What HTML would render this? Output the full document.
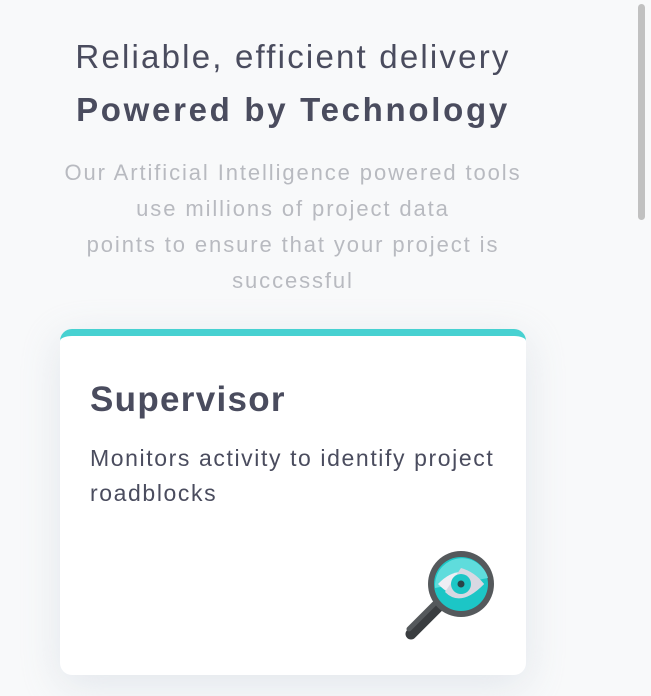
<!DOCTYPE html>
<html><head><style>
html,body{margin:0;padding:0;}
body{width:651px;height:696px;background:#f8f9fa;font-family:"Liberation Sans",sans-serif;position:relative;overflow:hidden;}
.h1{position:absolute;left:0;width:586px;text-align:center;color:#4a4c5e;white-space:nowrap;}
.l1{top:38px;font-size:33px;font-weight:300;letter-spacing:2.2px;}
.l2{top:91px;font-size:33px;font-weight:bold;letter-spacing:2.7px;}
.p{position:absolute;left:0;width:586px;top:155px;text-align:center;color:#b8bac0;font-size:22px;line-height:36px;letter-spacing:1.9px;white-space:nowrap;}
.card{position:absolute;left:60px;top:329px;width:466px;height:346px;background:#fff;border-radius:12px;border-top:7px solid #47d1d1;box-sizing:border-box;box-shadow:0 10px 40px rgba(200,208,220,0.45);}
.t{position:absolute;left:30px;top:44px;font-size:35px;font-weight:bold;color:#4a4c5e;letter-spacing:1.3px;}
.d{position:absolute;left:30px;top:105px;width:430px;font-size:23px;line-height:35px;color:#4a4c5e;font-weight:300;letter-spacing:1.6px;}
.sb{position:absolute;left:638px;top:4px;width:7px;height:216px;background:#c1c1c1;border-radius:4px;}
</style></head><body>
<div class="h1 l1">Reliable, efficient delivery</div>
<div class="h1 l2">Powered by Technology</div>
<div class="p">Our Artificial Intelligence powered tools<br>use millions of project data<br>points to ensure that your project is<br>successful</div>
<div class="card">
<div class="t">Supervisor</div>
<div class="d">Monitors activity to identify project<br>roadblocks</div>
<svg style="position:absolute;left:345px;top:212px" width="92" height="92" viewBox="0 0 92 92">
<line x1="6" y1="86" x2="34" y2="58" stroke="#3a3d40" stroke-width="11" stroke-linecap="round"/>
<line x1="4" y1="81" x2="29" y2="56" stroke="#55595c" stroke-width="5" stroke-linecap="round"/>
<circle cx="56" cy="36" r="33" fill="#55595c"/>
<circle cx="56" cy="36" r="27" fill="#1cc6c6"/>
<path d="M30 36 A27 27 0 0 1 83 30 L30 40Z" fill="#5fdcdc"/>
<path d="M33 36 Q56 12 79 36 Q56 60 33 36Z" fill="#eeeef4"/>
<path d="M56 20 Q70 24 79 36 Q56 60 40 44Z" fill="#d8d8e2"/>
<circle cx="56" cy="36" r="10" fill="#1cc6c6"/>
<circle cx="56" cy="36" r="3.5" fill="#2a4348"/>
</svg>
</div>
<div class="sb"></div>
</body></html>
